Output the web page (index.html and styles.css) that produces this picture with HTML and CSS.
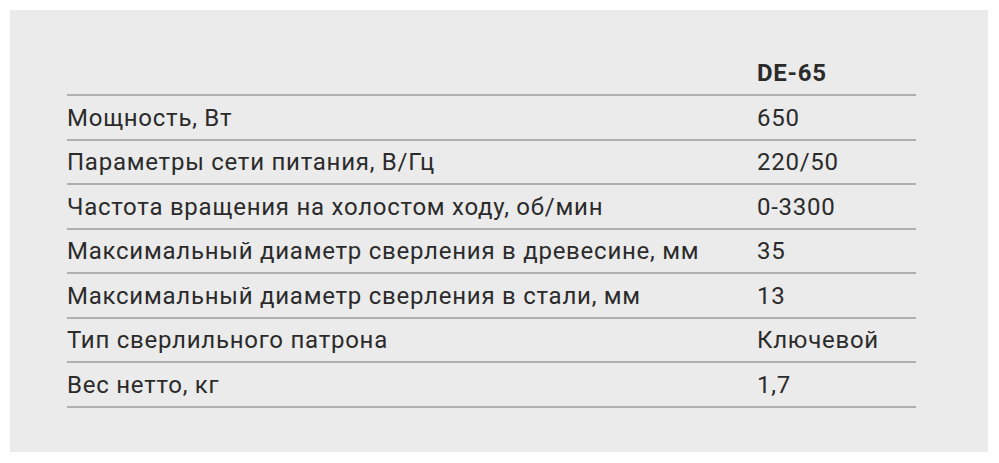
FILE: index.html
```html
<!DOCTYPE html>
<html lang="ru">
<head>
<meta charset="utf-8">
<link rel="stylesheet" href="styles.css">
</head>
<body>
<div class="panel">
  <div class="specs">
    <div class="row head"><div class="label"></div><div class="value">DE-65</div></div>
    <div class="row"><div class="label">Мощность, Вт</div><div class="value">650</div></div>
    <div class="row"><div class="label">Параметры сети питания, В/Гц</div><div class="value">220/50</div></div>
    <div class="row"><div class="label">Частота вращения на холостом ходу, об/мин</div><div class="value">0-3300</div></div>
    <div class="row"><div class="label">Максимальный диаметр сверления в древесине, мм</div><div class="value">35</div></div>
    <div class="row"><div class="label">Максимальный диаметр сверления в стали, мм</div><div class="value">13</div></div>
    <div class="row"><div class="label">Тип сверлильного патрона</div><div class="value">Ключевой</div></div>
    <div class="row"><div class="label">Вес нетто, кг</div><div class="value">1,7</div></div>
  </div>
</div>
</body>
</html>
```
FILE: styles.css
```css
html, body {
  margin: 0;
  padding: 0;
  background: #ffffff;
}
.panel {
  margin: 10px;
  width: 978px;
  height: 442px;
  box-sizing: border-box;
  background: #ebebeb;
  padding: 41.5px 0 0 57px;
}
.specs {
  width: 849px;
  font-family: Roboto, "Liberation Sans", sans-serif;
  font-size: 24px;
  letter-spacing: 0.75px;
  color: #2b2b2b;
}
.row {
  display: grid;
  grid-template-columns: 690px 1fr;
  height: 44.5px;
  box-sizing: border-box;
  border-bottom: 2px solid #b0b0b0;
  align-items: center;
}
.row .label, .row .value {
  line-height: 28px;
  padding-top: 1px;
}
.head .value {
  font-weight: 700;
}
```
